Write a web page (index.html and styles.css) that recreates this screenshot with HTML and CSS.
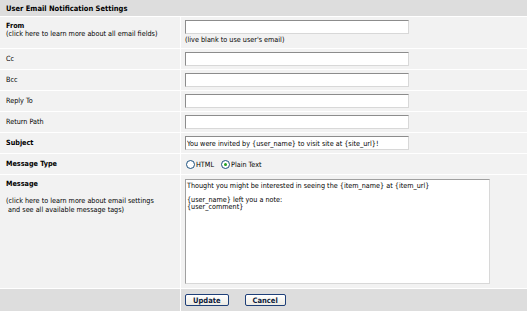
FILE: index.html
```html
<!DOCTYPE html>
<html lang="en">
<head>
    <meta charset="UTF-8">
    <title>User Email Notification Settings</title>
    <link rel="stylesheet" href="styles.css">
</head>
<body>
    <form class="settings">
        <!-- 标题 -->
        <div class="settings-title">User Email Notification Settings</div>

        <div class="field-label tall">
            <b>From</b><br>
            <a class="help">(click here to learn more about all email fields)</a>
        </div>
        <div class="field-input tall">
            <input type="text" class="text-box">
            <div class="hint">(live blank to use user's email)</div>
        </div>

        <div class="field-label">Cc</div>
        <div class="field-input"><input type="text" class="text-box"></div>

        <div class="field-label">Bcc</div>
        <div class="field-input"><input type="text" class="text-box"></div>

        <div class="field-label">Reply To</div>
        <div class="field-input"><input type="text" class="text-box"></div>

        <div class="field-label">Return Path</div>
        <div class="field-input"><input type="text" class="text-box"></div>

        <div class="field-label"><b>Subject</b></div>
        <div class="field-input">
            <input type="text" class="text-box" value="You were invited by {user_name} to visit site at {site_url}!">
        </div>

        <div class="field-label"><b>Message Type</b></div>
        <div class="field-input radios">
            <label class="radio-option"><input type="radio" name="msgtype" class="radio"> HTML</label>
            <label class="radio-option"><input type="radio" name="msgtype" class="radio" checked> Plain Text</label>
        </div>

        <div class="field-label message">
            <b>Message</b><br><br>
            <a class="help">(click here to learn more about email settings<br>&nbsp;and see all available message tags)</a>
        </div>
        <div class="field-input message">
            <textarea class="message-box">Thought you might be interested in seeing the {item_name} at {item_url}

{user_name} left you a note:
{user_comment}</textarea>
        </div>

        <!-- 底部按钮 -->
        <div class="footer-blank"></div>
        <div class="footer-actions">
            <button type="button" class="btn">Update</button>
            <button type="button" class="btn">Cancel</button>
        </div>
    </form>
</body>
</html>
```

FILE: styles.css
```css
/* 全局样式 */
body {
    margin: 0;
    background: #ffffff;
    font-family: Tahoma, "DejaVu Sans Condensed", "Liberation Sans", sans-serif;
    font-size: 7.2px;
    color: #000000;
}

/* 表格容器 */
.settings {
    display: grid;
    grid-template-columns: 180px 1fr;
    gap: 1px;
    background: #ffffff;
    margin: 0;
}

/* 标题栏 */
.settings-title {
    grid-column: 1 / 3;
    height: 16px;
    box-sizing: border-box;
    padding: 4px 6px 0;
    background: #dddddd;
    font-weight: bold;
    font-size: 7.5px;
}

/* 左侧标签 */
.field-label {
    height: 20px;
    box-sizing: border-box;
    padding: 6px 6px 0;
    background: #f2f2f2;
    line-height: 8px;
}

/* 右侧输入区 */
.field-input {
    height: 20px;
    box-sizing: border-box;
    padding: 3px 0 0 4px;
    background: #f2f2f2;
}

.tall {
    height: 31px;
}

.field-label.tall {
    padding-top: 5px;
}

.help {
    color: #000000;
    text-decoration: none;
    cursor: pointer;
}

/* 文本框 */
.text-box {
    display: block;
    width: 224px;
    height: 14px;
    box-sizing: border-box;
    margin: 0;
    padding: 0 1px;
    border: 1px solid;
    border-color: #8c8c8c #d8d8d8 #d8d8d8 #8c8c8c;
    background: #ffffff;
    font-family: inherit;
    font-size: 7.2px;
}

.hint {
    margin-top: 2px;
    line-height: 8px;
    color: #000000;
}

/* 单选项 */
.radios {
    display: flex;
    align-items: center;
    gap: 7px;
    padding-top: 0;
    padding-left: 5px;
}

.radio-option {
    display: flex;
    align-items: center;
    gap: 1px;
}

.radio {
    appearance: none;
    width: 9px;
    height: 9px;
    margin: 0;
    border: 1px solid #1c5180;
    border-radius: 50%;
    background: #ffffff;
    box-sizing: border-box;
    position: relative;
}

.radio:checked::after {
    content: "";
    position: absolute;
    left: 2px;
    top: 2px;
    width: 3px;
    height: 3px;
    border-radius: 50%;
    background: #21a121;
}

/* 消息行 */
.message {
    height: 113px;
}

.field-label.message {
    padding-top: 5px;
    line-height: 8.5px;
}

.field-input.message {
    padding-top: 4px;
}

.message-box {
    display: block;
    width: 305px;
    height: 105px;
    box-sizing: border-box;
    margin: 0;
    padding: 2px 1px;
    border: 1px solid;
    border-color: #a0a0a0 #d8d8d8 #d8d8d8 #a0a0a0;
    background: #ffffff;
    font-family: inherit;
    font-size: 7.2px;
    line-height: 7px;
    resize: none;
}

/* 底部栏 */
.footer-blank,
.footer-actions {
    height: 23px;
    background: #dddddd;
}

.footer-actions {
    display: flex;
    align-items: flex-start;
    gap: 16px;
    padding: 5px 0 0 4px;
    box-sizing: border-box;
}

.btn {
    height: 12px;
    padding: 0 7px;
    border: 1px solid #1e3f78;
    border-radius: 2px;
    background: linear-gradient(#ffffff, #eceae3);
    font-family: inherit;
    font-size: 7.5px;
    font-weight: bold;
    line-height: 9px;
    color: #0d1a3a;
}
```
